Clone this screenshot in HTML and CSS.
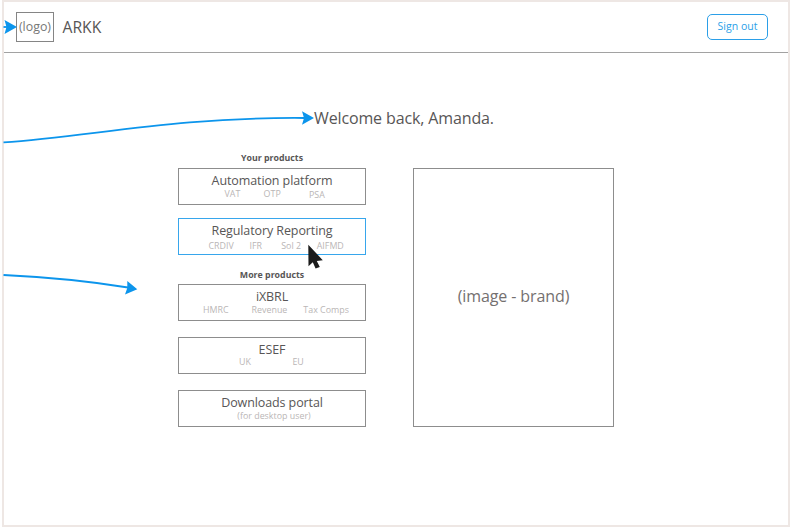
FILE: index.html
```html
<!DOCTYPE html>
<html lang="en">
<head>
<meta charset="utf-8">
<title>ARKK</title>
<link rel="stylesheet" href="styles.css">
</head>
<body>
<div class="frame">
  <header class="header">
    <div class="logo">(logo)</div>
    <div class="brand">ARKK</div>
    <button class="signout">Sign out</button>
  </header>
  <h1 class="welcome">Welcome back, Amanda.</h1>
  <main class="main">
    <div class="products">
      <h2 class="label">Your products</h2>
      <section class="card">
        <h3 class="title">Automation platform</h3>
        <div class="tags automation"><span>VAT</span><span>OTP</span><span class="low">PSA</span></div>
      </section>
      <section class="card active">
        <h3 class="title">Regulatory Reporting</h3>
        <div class="tags regulatory"><span>CRDIV</span><span>IFR</span><span class="sol">Sol 2</span><span>AIFMD</span></div>
      </section>
      <h2 class="label more">More products</h2>
      <section class="card">
        <h3 class="title">iXBRL</h3>
        <div class="tags ixbrl"><span>HMRC</span><span class="revenue">Revenue</span><span>Tax Comps</span></div>
      </section>
      <section class="card">
        <h3 class="title">ESEF</h3>
        <div class="tags esef"><span>UK</span><span>EU</span></div>
      </section>
      <section class="card">
        <h3 class="title">Downloads portal</h3>
        <div class="tags note"><span>(for desktop user)</span></div>
      </section>
    </div>
    <div class="image">(image - brand)</div>
  </main>
</div>
<svg class="overlay" width="790" height="528" viewBox="0 0 790 528">
  <g fill="none" stroke="#0c95ec" stroke-width="1.8">
    <path d="M3.500 27H8"/>
    <path d="M3.500 142.300C90 137 170 117 304 118"/>
    <path d="M3.500 275C45 277 88 281 128 287.500"/>
  </g>
  <g fill="#0c95ec">
    <path d="M4.500 20L17 27L4.500 34L6.500 27Z"/>
    <path d="M302 111.200L314 118L302 124.800L304 118Z"/>
    <path d="M127.300 281L137.300 289.300L125 294.500L127.300 288Z"/>
  </g>
  <path d="M308.300 244.800L322.800 260.200L316.800 261L319.800 267L315.600 268.500L312.800 262.300L308.500 266.200Z" fill="#1b1b1b"/>
</svg>
</body>
</html>
```
FILE: styles.css
```css
* { box-sizing: border-box; }
body {
  margin: 0;
  width: 790px;
  height: 528px;
  overflow: hidden;
  background: #fff;
  color: #585656;
  font-family: "Open Sans", sans-serif;
}
h1, h2, h3 { margin: 0; font-weight: 400; }
.frame {
  width: 788px;
  height: 527px;
  margin-left: 2px;
  border: 2px solid #eee7e4;
}
.header {
  display: flex;
  align-items: center;
  height: 51px;
  padding: 0 20px 1px 12px;
  border-bottom: 1px solid #a2a2a2;
}
.logo {
  display: flex;
  justify-content: center;
  width: 38px;
  height: 30px;
  border: 1px solid #858585;
  color: #777;
  font-size: 12.4px;
  line-height: 27px;
  white-space: nowrap;
}
.brand { margin-left: 8.5px; font-size: 15.7px; }
.signout {
  width: 61px;
  height: 26px;
  margin-left: auto;
  padding: 0 0 1px;
  border: 1px solid #2b9fe8;
  border-radius: 5px;
  background: #fff;
  color: #2b9fe8;
  font: 10.5px/23px "Open Sans", sans-serif;
}
.welcome {
  margin: 53px 0 0 310px;
  font-size: 16px;
  letter-spacing: -0.13px;
  line-height: 24px;
  white-space: nowrap;
}
.main {
  display: flex;
  gap: 47px;
  padding-left: 174px;
}
.products { width: 188px; padding-top: 21px; }
.label {
  height: 17px;
  font-size: 8.8px;
  font-weight: 700;
  line-height: 14px;
  text-align: center;
}
.more { height: 16px; }
.card {
  height: 37px;
  margin-bottom: 16px;
  padding-top: 5px;
  border: 1px solid #8d8d8d;
}
.card:nth-of-type(1), .card.active { margin-bottom: 13px; }
.active { border-color: #37a6ec; }
.title {
  font-size: 12.5px;
  letter-spacing: -0.1px;
  line-height: 14px;
  text-align: center;
}
.tags {
  display: flex;
  margin-top: 1px;
  color: #bab6b6;
  font-size: 8.9px;
  line-height: 10px;
  white-space: nowrap;
}
.automation { padding-left: 45.5px; gap: 23.3px; }
.low { margin: 1px 0 0 5px; }
.regulatory { padding-left: 29.5px; gap: 15.7px; margin-top: 3px; }
.sol { margin-left: 3.5px; }
.ixbrl { padding-left: 24px; gap: 16px; }
.revenue { margin-left: 7px; }
.esef { padding-left: 60px; gap: 41.5px; margin-top: 0; }
.note { justify-content: center; padding-left: 4px; }
.image {
  display: flex;
  align-items: center;
  justify-content: center;
  width: 201px;
  height: 259px;
  margin-top: 38px;
  padding-bottom: 4px;
  border: 1px solid #8d8d8d;
  color: #747070;
  font-size: 16px;
  letter-spacing: -0.1px;
}
.overlay { position: absolute; left: 0; top: 0; pointer-events: none; }
```
